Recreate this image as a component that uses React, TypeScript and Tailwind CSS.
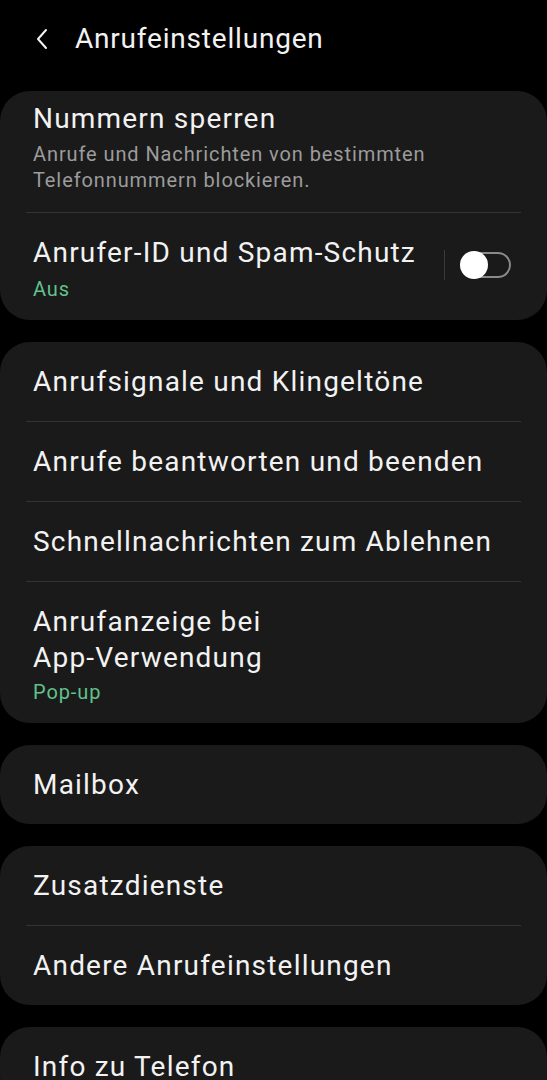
import React from 'react';

const font = { fontFamily: 'Roboto, "Noto Sans", sans-serif' };

const titleCls = 'text-[28px] leading-[36px] tracking-[1.2px] text-[#f2f2f2]';
const subCls = 'text-[20px] leading-[26px] tracking-[0.9px]';

function Row({ title, last }: { title: string; last?: boolean }) {
  return (
    <div className="px-[33px]">
      <div className="flex flex-col justify-center h-[79px]">
        <div className={titleCls}>{title}</div>
      </div>
      {!last && <div className="h-px bg-[#343434] -mx-[7px]" />}
    </div>
  );
}

function Card({ children }: { children: React.ReactNode }) {
  return <div className="bg-[#1a1a1a] rounded-[30px]">{children}</div>;
}

export default function App() {
  return (
    <div className="w-[547px] h-[1080px] bg-black overflow-hidden" style={font}>
      <div className="flex items-center h-[80px] pl-[34px] pb-[2px]">
        <svg width="16" height="22" viewBox="0 0 16 22" className="mr-[25px]">
          <path d="M12 2 L4 11 L12 20" stroke="#f2f2f2" strokeWidth="2" fill="none" strokeLinecap="round" strokeLinejoin="round" />
        </svg>
        <span className="text-[28px] tracking-[0.8px] text-[#f2f2f2]">Anrufeinstellungen</span>
      </div>
      <div className="flex flex-col gap-[22px] pt-[11px]">
        <Card>
          <div className="px-[33px] pt-[10px] pb-[19px]">
            <div className={titleCls}>Nummern sperren</div>
            <div className={`${subCls} text-[#9c9c9c] mt-[4px]`}>
              Anrufe und Nachrichten von bestimmten
              <br />
              Telefonnummern blockieren.
            </div>
          </div>
          <div className="h-px bg-[#343434] mx-[26px]" />
          <div className="flex items-center pl-[33px] pr-[36px] pt-[22px] pb-[18px]">
            <div className="flex-1">
              <div className={titleCls}>Anrufer-ID und Spam-Schutz</div>
              <div className={`${subCls} text-[#62c28c] mt-[5px]`}>Aus</div>
            </div>
            <div className="w-px h-[30px] bg-[#3a3a3a] mr-[16px] -mt-[8px]" />
            <div className="relative w-[50px] h-[26px] rounded-full border-2 border-[#8a8a8a] -mt-[8px]">
              <div className="absolute -left-[3px] -top-[3px] w-[28px] h-[28px] rounded-full bg-white" />
            </div>
          </div>
        </Card>
        <Card>
          <Row title="Anrufsignale und Klingeltöne" />
          <Row title="Anrufe beantworten und beenden" />
          <Row title="Schnellnachrichten zum Ablehnen" />
          <div className="px-[33px] pt-[22px] pb-[18px]">
            <div className={titleCls}>
              Anrufanzeige bei
              <br />
              App-Verwendung
            </div>
            <div className={`${subCls} text-[#62c28c] mt-[3px]`}>Pop-up</div>
          </div>
        </Card>
        <Card>
          <Row title="Mailbox" last />
        </Card>
        <Card>
          <Row title="Zusatzdienste" />
          <Row title="Andere Anrufeinstellungen" last />
        </Card>
        <Card>
          <Row title="Info zu Telefon" last />
        </Card>
      </div>
    </div>
  );
}
